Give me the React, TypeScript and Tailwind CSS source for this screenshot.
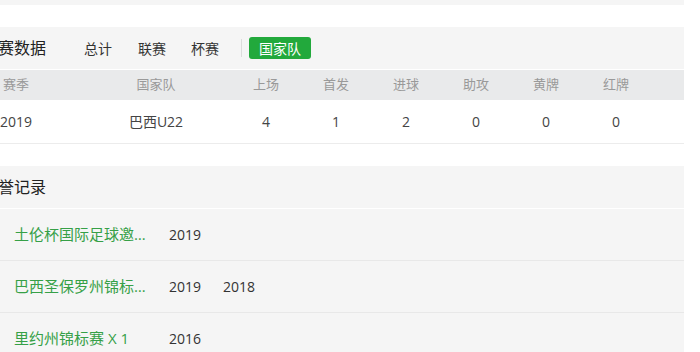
const font = { fontFamily: '"Open Sans", "Noto Sans CJK SC", sans-serif' };

const columns = ["赛季", "国家队", "上场", "首发", "进球", "助攻", "黄牌", "红牌"];
const row = ["2019", "巴西U22", "4", "1", "2", "0", "0", "0"];

const honours = [
  { name: "土伦杯国际足球邀请赛 X 1", years: ["2019"] },
  { name: "巴西圣保罗州锦标赛 X 2", years: ["2019", "2018"] },
  { name: "里约州锦标赛 X 1", years: ["2016"] },
];

export default function App() {
  return (
    <div className="h-[352px] w-[700px] overflow-hidden bg-white" style={font}>
      <div className="-ml-[60px] w-[744px]">
        {/* previous panel edge */}
        <div className="h-[5px] bg-[#f5f5f5]" />

        {/* Match stats */}
        <section className="mt-[22px] bg-[#f5f5f5]">
          <div className="flex h-[42px] items-center pl-[42px]">
            <h2 className="text-[16px] leading-none text-[#222]">比赛数据</h2>

            <div className="ml-[38px] flex items-center text-[14px] text-[#333]">
              <span>总计</span>
              <span className="ml-[26px]">联赛</span>
              <span className="ml-[25px]">杯赛</span>
              <span className="ml-[22px] h-[18px] w-px bg-[#dcdcdc]" />
              <span className="ml-[7px] flex h-[22px] items-center rounded-[3px] bg-[#22a93c] px-[10px] text-white">
                国家队
              </span>
            </div>
          </div>

          <div className="h-px bg-white" />

          <div className="grid h-[30px] grid-cols-[130px_150px_repeat(6,70px)] items-center bg-[#e9eaeb] pl-[11px] text-center text-[13px] text-[#999]">
            {columns.map((c) => (
              <span key={c}>{c}</span>
            ))}
          </div>

          <div className="grid h-[44px] grid-cols-[130px_150px_repeat(6,70px)] items-center border-b border-[#ececec] bg-white pl-[11px] text-center text-[14px] text-[#444]">
            {row.map((v, i) => (
              <span key={i}>{v}</span>
            ))}
          </div>
        </section>

        {/* Honours */}
        <section className="mt-[22px] bg-[#f5f5f5]">
          <div className="flex h-[43px] items-center border-b border-white pl-[42px]">
            <h2 className="text-[16px] leading-none text-[#222]">荣誉记录</h2>
          </div>

          {honours.map((h) => (
            <div
              key={h.name}
              className="flex h-[52px] items-center border-b border-[#e8e8e8] pl-[74px] text-[15px]"
            >
              <div className="w-[155px]">
                <span className="block max-w-[140px] truncate text-[#36a047]">{h.name}</span>
              </div>
              <div className="flex gap-[22px] text-[14px] text-[#333]">
                {h.years.map((y) => (
                  <span key={y}>{y}</span>
                ))}
              </div>
            </div>
          ))}
        </section>
      </div>
    </div>
  );
}
